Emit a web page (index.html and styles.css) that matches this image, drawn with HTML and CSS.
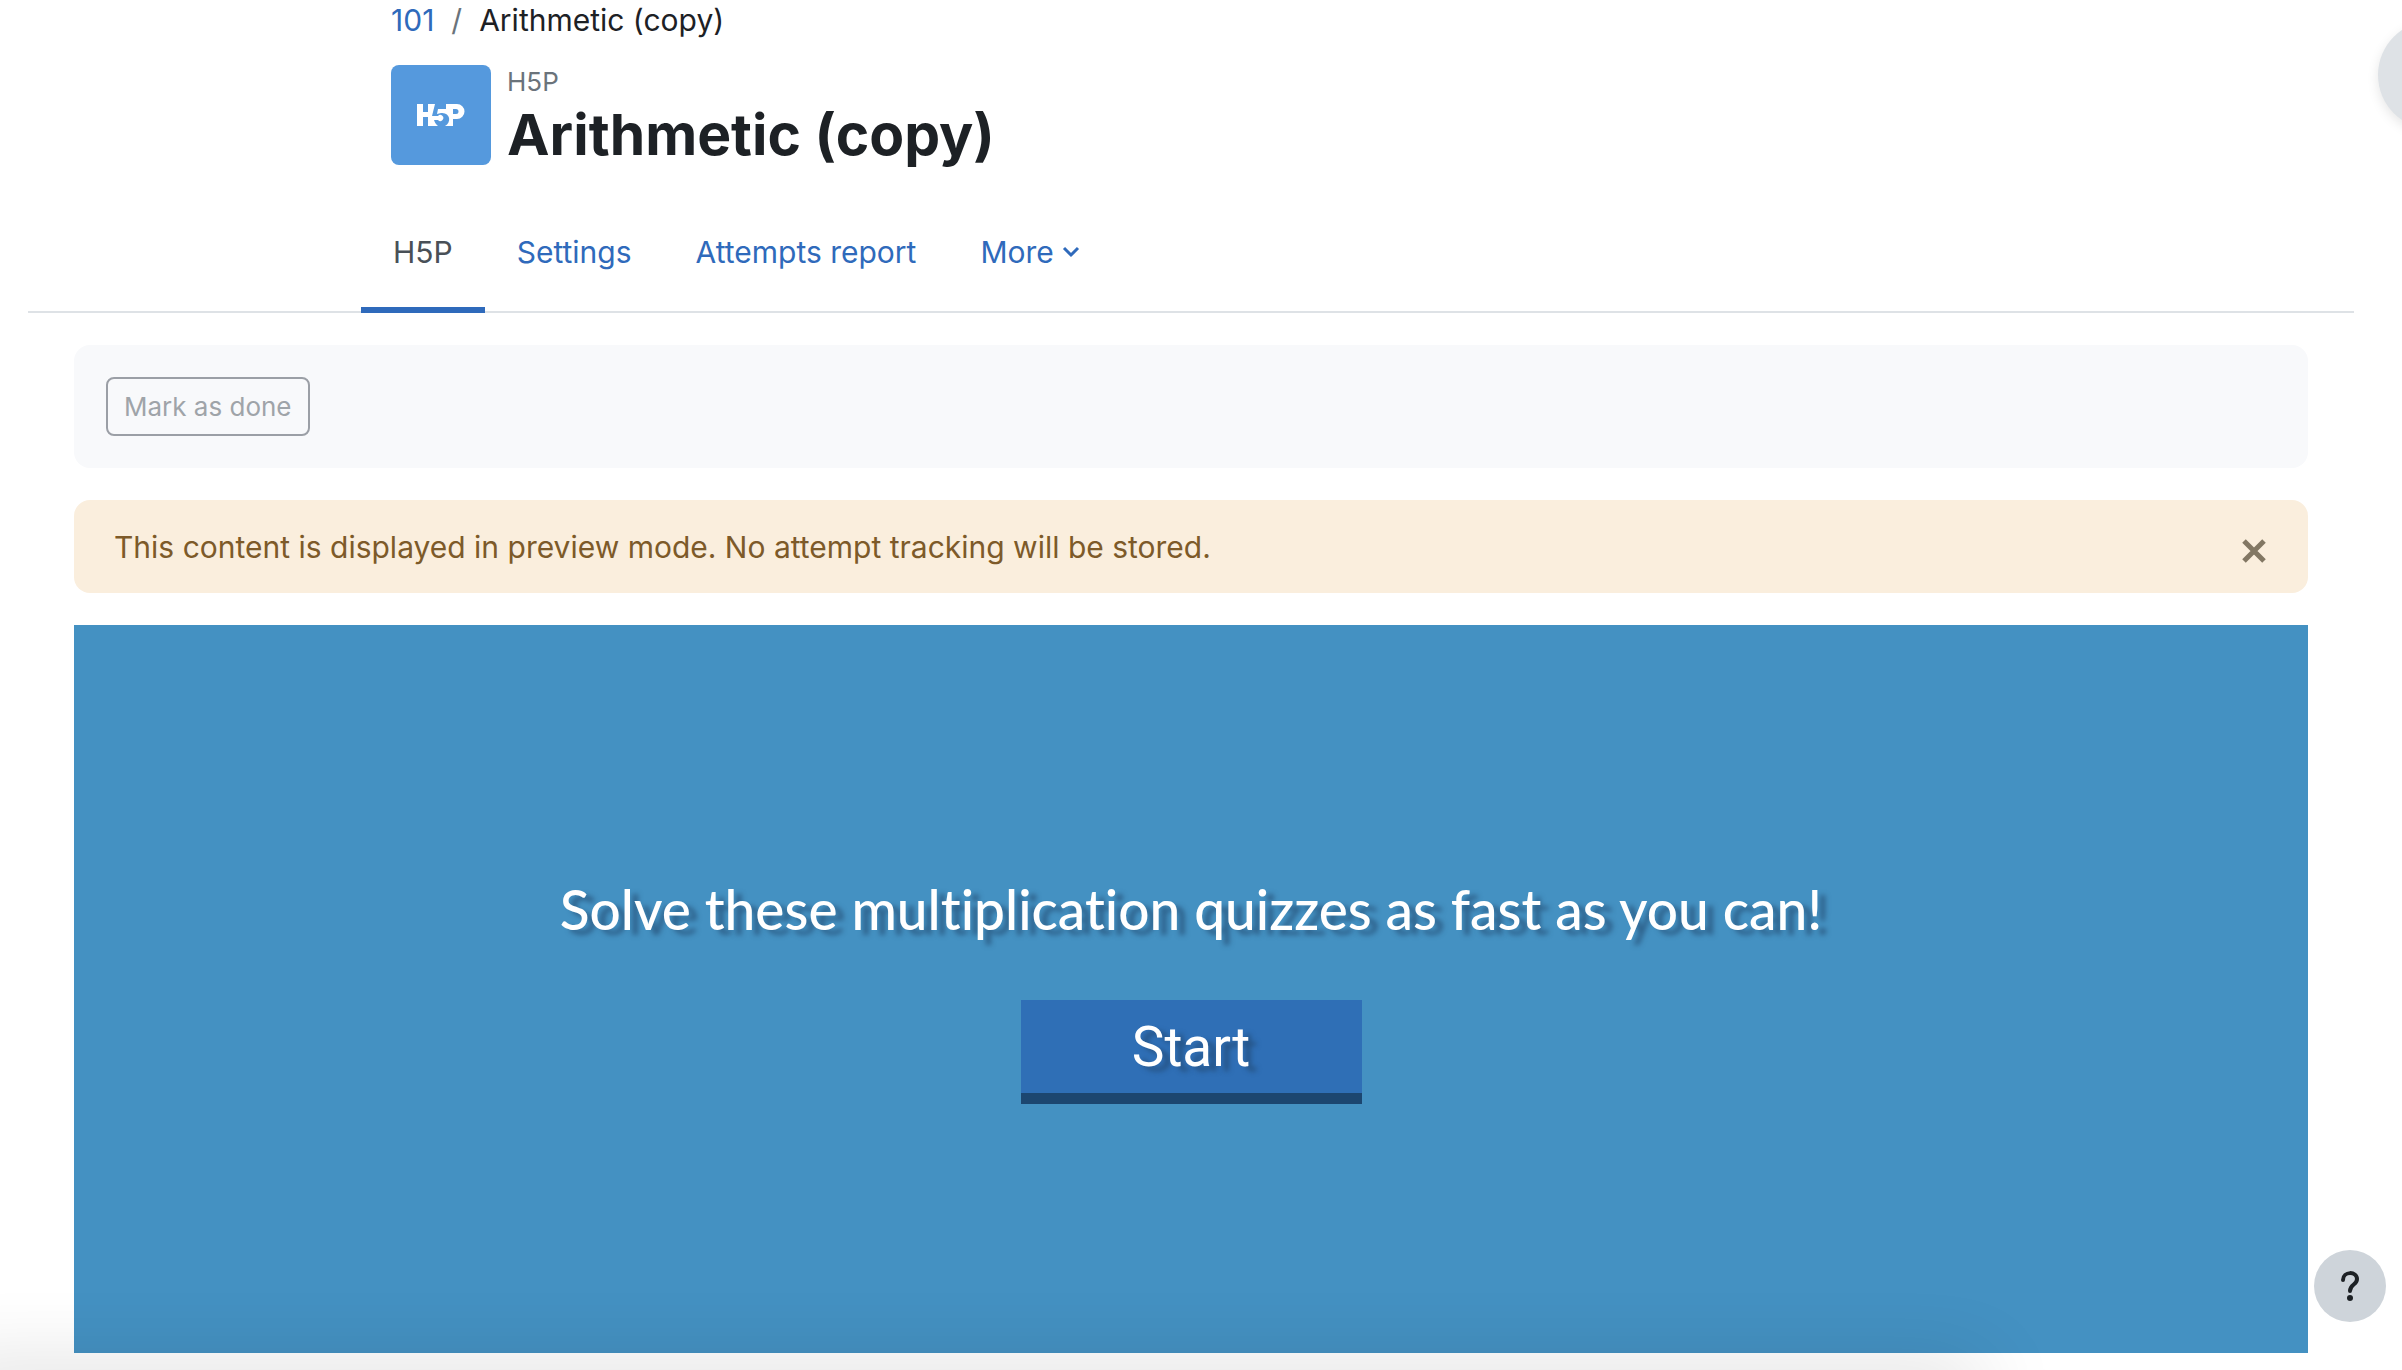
FILE: index.html
```
<!DOCTYPE html>
<html lang="en">
<head>
    <meta charset="UTF-8">
    <meta name="viewport" content="width=device-width, initial-scale=1.0">
    <title>Arithmetic (copy)</title>
    <link rel="stylesheet" href="styles.css">
</head>
<body>

    <div class="page">
        <header class="page-header">
            <nav class="breadcrumb" aria-label="Breadcrumb">
                <a href="#">101</a>
                <span class="divider">/</span>
                <span>Arithmetic (copy)</span>
            </nav>
            <div class="page-context">
                <div class="activity-icon">
                    <svg width="48" height="22" viewBox="0 0 48 22" aria-hidden="true">
                        <path fill="#ffffff" d="M0 0h6v8h5V0h7l-3 12h6a3 3 0 1 1 0 4h-4c1 3 2 4 4 6H11v-9H6v9H0z"/>
                        <path fill="#ffffff" fill-rule="evenodd" d="M21 5h8V0h11a7 7 0 0 1 0 15h-4v7h-8c7-4 5-14-4-13l-4 1zM36 5v5h3a2 2 0 0 0 0-5z"/>
                    </svg>
                </div>
                <div class="page-heading">
                    <span class="activity-type">H5P</span>
                    <h1>Arithmetic (copy)</h1>
                </div>
            </div>
        </header>

        <nav class="tabs" aria-label="Activity">
            <div class="tabs-inner">
                <a class="tab active" href="#">H5P</a>
                <a class="tab" href="#">Settings</a>
                <a class="tab" href="#">Attempts report</a>
                <a class="tab" href="#">More
                    <svg width="18" height="12" viewBox="0 0 18 12" aria-hidden="true">
                        <path d="M2 2l7 7 7-7" fill="none" stroke="currentColor" stroke-width="3"/>
                    </svg>
                </a>
            </div>
        </nav>

        <main class="content">
            <div class="activity-info">
                <button class="btn-done" disabled>Mark as done</button>
            </div>

            <div class="alert" role="alert">
                <span>This content is displayed in preview mode. No attempt tracking will be stored.</span>
                <button class="close" aria-label="Close">
                    <svg width="24" height="24" viewBox="0 0 24 24" aria-hidden="true">
                        <path d="M2 2l20 20M22 2L2 22" stroke="currentColor" stroke-width="5"/>
                    </svg>
                </button>
            </div>

            <section class="quiz">
                <h2>Solve these multiplication quizzes as fast as you can!</h2>
                <button class="btn-start">Start</button>
            </section>
        </main>
    </div>

    <button class="drawer-toggle" aria-label="Open block drawer"></button>
    <button class="help" aria-label="Help">
        <svg width="20" height="30" viewBox="0 0 20 30" aria-hidden="true">
            <path d="M3 9c0-9 14-9 14-1 0 6-7 5-7 12" fill="none" stroke="currentColor" stroke-width="4" stroke-linecap="round"/>
            <circle cx="10" cy="27" r="3" fill="currentColor"/>
        </svg>
    </button>
    <div class="bottom-shade"></div>

</body>
</html>
```
FILE: styles.css
```
* {
    box-sizing: border-box;
}

body {
    font-family: Inter, sans-serif;
    font-size: 30px;
    line-height: 40px;
    color: #1d2125;
    background-color: #ffffff;
    margin: 0;
    overflow: hidden;
}

a {
    color: #2f6abb;
    text-decoration: none;
}

button {
    font-family: inherit;
    border: none;
    cursor: pointer;
}

h1, h2 {
    margin: 0;
}

.page {
    padding: 0 48px 0 28px;
}

.page-header, .tabs-inner {
    max-width: 1600px;
    margin: 0 auto;
}

.breadcrumb {
    display: flex;
    gap: 17px;
}

.divider {
    color: #6a737b;
}

.page-context {
    display: flex;
    gap: 16px;
    margin-top: 25px;
}

.activity-icon {
    display: flex;
    align-items: center;
    justify-content: center;
    width: 100px;
    height: 100px;
    background-color: #5599dd;
    border-radius: 8px;
}

.page-heading {
    display: flex;
    flex-direction: column;
}

.activity-type {
    font-size: 26px;
    line-height: 34px;
    color: #6a737b;
}

h1 {
    font-size: 57px;
    line-height: 72px;
    font-weight: 700;
}

.tabs {
    border-bottom: 2px solid #dee2e6;
    margin-top: 20px;
}

.tabs-inner {
    display: flex;
}

.tab {
    display: flex;
    align-items: center;
    gap: 8px;
    height: 122px;
    margin-bottom: -2px;
    padding: 6px 32px 0;
    border-bottom: 6px solid transparent;
}

.tab:first-child {
    margin-left: -30px;
}

.tab.active {
    color: #495057;
    border-bottom-color: #2f6abb;
}

.content {
    display: flex;
    flex-direction: column;
    gap: 32px;
    padding: 32px 46px 0;
}

.activity-info {
    padding: 32px;
    background-color: #f8f9fb;
    border-radius: 16px;
    display: flex;
}

.btn-done {
    height: 59px;
    padding: 0 16px;
    font-size: 26px;
    color: #9fa4a9;
    background-color: transparent;
    border: 2px solid #9b9fa6;
    border-radius: 8px;
}

.alert {
    display: flex;
    align-items: center;
    justify-content: space-between;
    height: 93px;
    padding: 0 42px 0 40px;
    color: #7d5a29;
    background-color: #faeedd;
    border-radius: 16px;
}

.close {
    display: flex;
    padding: 8px 0 0;
    color: #827763;
    background-color: transparent;
}

.quiz {
    display: flex;
    flex-direction: column;
    align-items: center;
    height: 728px;
    padding-top: 248px;
    background-color: #4491c2;
    color: #ffffff;
    text-shadow: 8px 5px 5px rgba(31, 67, 103, 0.6);
}

h2 {
    font-family: Lato, sans-serif;
    font-size: 55px;
    line-height: 72px;
    font-weight: 500;
    font-variant-ligatures: none;
}

.btn-start {
    width: 341px;
    height: 104px;
    margin-top: 55px;
    font-family: Roboto, sans-serif;
    font-size: 55px;
    font-weight: 400;
    color: #ffffff;
    background-color: #2f6fb6;
    border-bottom: 11px solid #1c4670;
    text-shadow: inherit;
}

.drawer-toggle {
    position: fixed;
    top: 21px;
    right: -84px;
    width: 108px;
    height: 108px;
    background-color: #dee2e6;
    border-radius: 50%;
    box-shadow: 0 4px 12px rgba(0, 0, 0, 0.1);
}

.help {
    position: fixed;
    right: 16px;
    bottom: 48px;
    display: flex;
    align-items: center;
    justify-content: center;
    width: 72px;
    height: 72px;
    padding: 0;
    color: #1d2125;
    background-color: #ced4da;
    border-radius: 50%;
}

/* Soft shadow along the bottom edge of the window */
.bottom-shade {
    position: fixed;
    left: -60px;
    right: 420px;
    bottom: -40px;
    height: 40px;
    box-shadow: 0 0 80px rgba(0, 0, 0, 0.18);
    pointer-events: none;
}
```
